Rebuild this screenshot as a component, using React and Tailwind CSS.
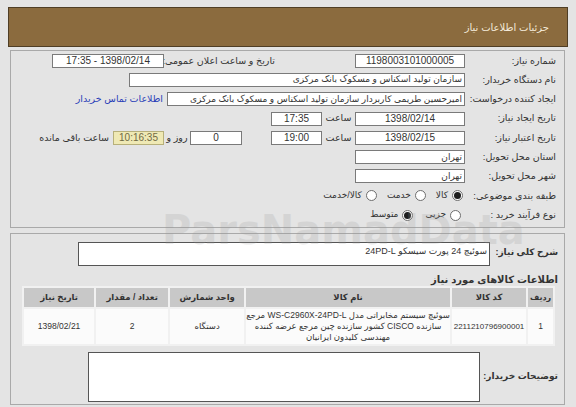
import React from 'react';

const FONT = { fontFamily: '"Liberation Sans", "DejaVu Sans", sans-serif' };

function Box({ className = '', children, align = 'center' }) {
  const a = align === 'right' ? 'justify-start pr-[2px] text-[9px]' : 'justify-center text-[10px]';
  return (
    <div className={`h-[14px] border border-[#7a7a7a] bg-white flex items-center text-[#333] leading-none shrink-0 whitespace-nowrap overflow-hidden ${a} ${className}`}>
      {children}
    </div>
  );
}

function Radio({ checked, label, className = '' }) {
  return (
    <div className={`flex items-center gap-[4px] shrink-0 ${className}`}>
      <span className="w-[11px] h-[11px] rounded-full border border-[#6e6e6e] bg-white flex items-center justify-center">
        {checked && <span className="w-[7px] h-[7px] rounded-full bg-[#1e1e1e]" />}
      </span>
      <span className="text-[9px] text-[#333]">{label}</span>
    </div>
  );
}

function Row({ label, children }) {
  return (
    <div className="h-[19.3px] flex items-center">
      <div className="w-[91px] shrink-0 text-[9.5px] text-[#333] whitespace-nowrap">{label}</div>
      {children}
    </div>
  );
}

export default function App() {
  return (
    <div dir="rtl" style={FONT} className="w-[576px] h-[407px] bg-[#e4e4e4] overflow-hidden relative pt-[7px]">
      <div className="mx-[8px] h-[40px] bg-[#8b6b3e] border border-[#4f3e25] flex items-center pr-[18px]">
        <span className="text-[10px] text-[#f3ead9]">جزئیات اطلاعات نیاز</span>
      </div>

      <div className="ml-[10px] mr-[11px] mt-[3px] h-[178px] border border-[#a9a9a9] pr-[8px]">
        <Row label="شماره نیاز:">
          <Box className="w-[110px]">1198003101000005</Box>
          <div className="w-[80px] shrink-0" />
          <div className="w-[111px] shrink-0 text-[9.5px] text-[#333] whitespace-nowrap">تاریخ و ساعت اعلان عمومی:</div>
          <Box className="w-[112px]">1398/02/14 - 17:35</Box>
        </Row>
        <Row label="نام دستگاه خریدار:">
          <Box className="w-[336px]" align="right">سازمان تولید اسکناس و مسکوک بانک مرکزی</Box>
        </Row>
        <Row label="ایجاد کننده درخواست:">
          <Box className="w-[298px]" align="right">امیرحسین طریمی کاربردار سازمان تولید اسکناس و مسکوک بانک مرکزی</Box>
          <span className="mr-[4px] text-[9.5px] text-[#2b3fb8] whitespace-nowrap">اطلاعات تماس خریدار</span>
        </Row>
        <Row label="تاریخ ایجاد نیاز:">
          <Box className="w-[110px]">1398/02/14</Box>
          <span className="w-[33px] shrink-0 text-center text-[9.5px] text-[#333]">ساعت</span>
          <Box className="w-[51px]">17:35</Box>
        </Row>
        <Row label="تاریخ اعتبار نیاز:">
          <Box className="w-[110px]">1398/02/15</Box>
          <span className="w-[33px] shrink-0 text-center text-[9.5px] text-[#333]">ساعت</span>
          <Box className="w-[51px]">19:00</Box>
          <div className="w-[29px] shrink-0" />
          <Box className="w-[52px]">0</Box>
          <span className="w-[26px] shrink-0 text-center text-[9.5px] text-[#333] whitespace-nowrap">روز و</span>
          <div className="w-[51px] h-[14px] shrink-0 border border-[#b7b07a] bg-[#efe9b4] flex items-center justify-center text-[10px] text-[#6f6a45]">10:16:35</div>
          <span className="mr-[4px] text-[9.5px] text-[#333] whitespace-nowrap">ساعت باقی مانده</span>
        </Row>
        <Row label="استان محل تحویل:">
          <Box className="w-[110px]" align="right">تهران</Box>
        </Row>
        <Row label="شهر محل تحویل:">
          <Box className="w-[110px]" align="right">تهران</Box>
        </Row>
        <Row label="طبقه بندی موضوعی:">
          <div className="flex items-center gap-[8px]">
            <Radio checked label="کالا" className="mr-[2px]" />
            <Radio label="خدمت" className="mr-[2px]" />
            <Radio label="کالا/خدمت" className="mr-[2px]" />
          </div>
        </Row>
        <Row label="نوع فرآیند خرید :">
          <div className="flex items-center gap-[12px]">
            <Radio label="جزیی" className="mr-[4px]" />
            <Radio checked label="متوسط" />
          </div>
        </Row>
      </div>

      <div className="ml-[10px] mr-[11px] mt-[5px] h-[172px] border border-[#a9a9a9] pr-[6px] pl-[11px] pt-[8px]">
        <div className="flex items-start">
          <div className="w-[68px] shrink-0 pt-[4px] text-[9px] font-bold text-[#333] whitespace-nowrap">شرح کلی نیاز:</div>
          <div className="w-[412px] h-[24px] border border-[#555] bg-white text-[9px] text-[#333] pr-[2px] pt-[2px]">سوئیچ 24 پورت سیسکو 24PD-L</div>
        </div>
        <div className="mt-[8px] leading-[12px] text-[10px] font-bold text-[#333]">اطلاعات کالاهای مورد نیاز</div>
        <table className="mr-[3px] w-[533px] border-separate border-spacing-[2px] bg-[#f1f1f1] text-[8.5px] text-[#333]">
          <thead>
            <tr className="h-[19px] bg-[#c8c8c8]">
              <th className="w-[25px] font-bold text-[8px] whitespace-nowrap">ردیف</th>
              <th className="w-[74px] font-bold">کد کالا</th>
              <th className="w-[203px] font-bold">نام کالا</th>
              <th className="w-[74px] font-bold">واحد شمارش</th>
              <th className="w-[72px] font-bold">تعداد / مقدار</th>
              <th className="font-bold">تاریخ نیاز</th>
            </tr>
          </thead>
          <tbody>
            <tr className="bg-[#fbfbfb] text-center h-[35px]">
              <td className="text-[8.5px]">1</td>
              <td className="text-[8px]">2211210796900001</td>
              <td className="leading-[11px] text-[8.5px] whitespace-nowrap">
                سوئیچ سیستم مخابراتی مدل WS-C2960X-24PD-L مرجع
                <br />
                سازنده CISCO کشور سازنده چین مرجع عرضه کننده
                <br />
                مهندسی کلیدون ایرانیان
              </td>
              <td>دستگاه</td>
              <td className="text-[8.5px]">2</td>
              <td className="text-[8.5px]">1398/02/21</td>
            </tr>
          </tbody>
        </table>
        <div className="flex items-center mt-[6px]">
          <div className="w-[78px] shrink-0 text-[9px] font-bold text-[#333] whitespace-nowrap">توضیحات خریدار:</div>
          <div className="w-[392px] h-[50px] border border-[#555] bg-white" />
        </div>
      </div>

      <div className="absolute left-[162px] top-[210px] pointer-events-none select-none text-[40px] font-bold text-[#9a9a9a] opacity-20 leading-none" dir="ltr" style={{ fontFamily: '"DejaVu Sans", sans-serif' }}>
        ParsNamadData
      </div>
    </div>
  );
}
